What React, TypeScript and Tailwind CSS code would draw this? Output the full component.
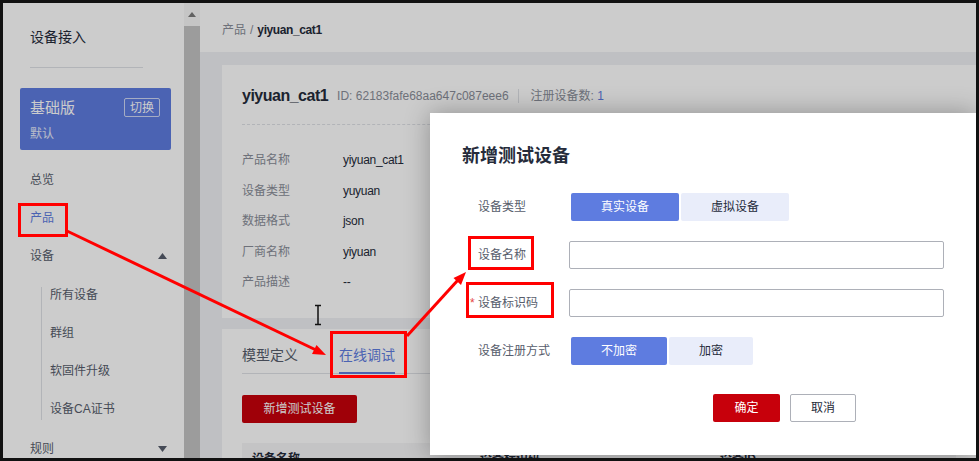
import { ReactNode } from 'react'

const font = 'font-["Liberation_Sans","Noto_Sans_CJK_SC",sans-serif]'

function Caret({ up }: { up?: boolean }) {
  return (
    <svg width="9" height="6" viewBox="0 0 9 6" className="fill-[#575d6c]">
      {up ? <path d="M0 6 L4.5 0 L9 6 Z" /> : <path d="M0 0 L4.5 6 L9 0 Z" />}
    </svg>
  )
}

function NavItem({ children, active, caret }: { children: ReactNode; active?: boolean; caret?: 'up' | 'down' }) {
  return (
    <div className="h-[38px] pl-[10px] flex items-center justify-between">
      <span className={`text-[12px] ${active ? 'text-[#5e7ce0]' : 'text-[#575d6c]'}`}>{children}</span>
      {caret && <Caret up={caret === 'up'} />}
    </div>
  )
}

function Sidebar() {
  return (
    <aside className="w-[181px] shrink-0 bg-white px-[17px] pt-[24px]">
      <div className="pl-[10px] text-[14px] leading-[20px] text-[#252b3a]">设备接入</div>
      <div className="ml-[10px] mt-[20px] h-px w-[113px] bg-[#dfe1e6]" />

      {/* edition card */}
      <div className="mt-[20px] h-[62px] w-[151px] rounded-[2px] bg-[#5e7ce0] px-[10px] pt-[10px] text-white">
        <div className="flex items-start justify-between">
          <span className="text-[15px] leading-[20px]">基础版</span>
          <span className="mr-[1px] flex h-[19px] w-[36px] items-center justify-center rounded-[2px] border border-white/70 text-[12px] leading-none">
            切换
          </span>
        </div>
        <div className="mt-[8px] text-[12px] leading-[16px] text-white/85">默认</div>
      </div>

      <div className="mt-[11px]">
        <NavItem>总览</NavItem>
        <NavItem active>产品</NavItem>
        <NavItem caret="up">设备</NavItem>
        <div className="relative mt-px">
          <span className="absolute left-[21px] top-[11px] bottom-[8px] w-px bg-[#dfe1e6]" />
          {['所有设备', '群组', '软固件升级', '设备CA证书'].map((s) => (
            <div key={s} className="flex h-[38px] items-center pl-[30px] text-[12px] text-[#575d6c]">
              {s}
            </div>
          ))}
        </div>
        <div className="mt-[2px]">
          <NavItem caret="down">规则</NavItem>
        </div>
      </div>
    </aside>
  )
}

function Scrollbar() {
  return (
    <div className="flex w-[16px] shrink-0 flex-col bg-[#f7f7f7]">
      <div className="flex h-[23px] items-center justify-center">
        <svg width="8" height="5" viewBox="0 0 8 5" className="fill-[#7a7a7a]">
          <path d="M0 5 L4 0 L8 5 Z" />
        </svg>
      </div>
      <div className="flex-1 bg-[#c4c4c4]" />
    </div>
  )
}

const info = [
  ['产品名称', 'yiyuan_cat1'],
  ['设备类型', 'yuyuan'],
  ['数据格式', 'json'],
  ['厂商名称', 'yiyuan'],
  ['产品描述', '--'],
]

function Main() {
  return (
    <main className="flex-1 bg-[#eff0f4]">
      <div className="flex h-[49px] items-center bg-white pl-[22px] pt-[5px] text-[12px]">
        <span className="text-[#8a8e99]">产品</span>
        <span className="mx-[4px] text-[#8a8e99]">/</span>
        <span className="font-bold tracking-[-0.4px] text-[#252b3a]">yiyuan_cat1</span>
      </div>

      <div className="pl-[22px] pt-[13px]">
        {/* product summary */}
        <div className="h-[253px] bg-white px-[20px] pt-[20px]">
          <div className="flex h-[22px] items-center">
            <span className="text-[16px] font-bold tracking-[-0.5px] text-[#252b3a]">yiyuan_cat1</span>
            <span className="ml-[9px] text-[12px] text-[#8a8e99]">ID: 62183fafe68aa647c087eee6</span>
            <span className="ml-[9px] h-[14px] w-px bg-[#dfe1e6]" />
            <span className="ml-[12px] text-[12px] text-[#8a8e99]">
              注册设备数: <span className="text-[#5e7ce0]">1</span>
            </span>
          </div>
          <div className="mt-[17px] border-t border-dashed border-[#dfe1e6]" />
          <div className="mt-[20px]">
            {info.map(([k, v]) => (
              <div key={k} className="flex h-[30.5px] items-center text-[12px]">
                <span className="w-[101px] text-[#8a8e99]">{k}</span>
                <span className="tracking-[-0.3px] text-[#252b3a]">{v}</span>
              </div>
            ))}
          </div>
        </div>

        {/* tabs + device list */}
        <div className="mt-[11px] h-[140px] bg-white px-[20px] pt-[7px]">
          <div className="flex h-[38px] gap-[41px] border-b border-[#dfe1e6] text-[14px]">
            <div className="flex items-center pt-[2px] text-[#575d6c]">模型定义</div>
            <div className="-mb-px flex items-center border-b-2 border-[#5e7ce0] pt-[2px] text-[#5e7ce0]">在线调试</div>
          </div>
          <button className="mt-[21px] h-[28px] w-[115px] rounded-[2px] bg-[#c7000b] text-[12px] text-white">
            新增测试设备
          </button>
          <div className="mt-[20px] flex h-[32px] items-center bg-[#f6f6f7] text-[12px] font-bold text-[#252b3a]">
            <span className="w-[238px] pl-[10px]">设备名称</span>
            <span className="w-[240px]">设备标识码</span>
            <span>设备ID</span>
          </div>
        </div>
      </div>
    </main>
  )
}

function Segmented({ items, active }: { items: string[]; active: number }) {
  return (
    <div className="flex h-[28px] gap-[2px]">
      {items.map((s, i) => (
        <div
          key={s}
          className={`flex items-center rounded-[2px] px-[30px] text-[12px] ${
            i === active ? 'bg-[#5e7ce0] text-white' : 'bg-[#e9edfa] text-[#252b3a]'
          }`}
        >
          {s}
        </div>
      ))}
    </div>
  )
}

function Field({ label, required, children }: { label: string; required?: boolean; children: ReactNode }) {
  return (
    <div className="flex h-[28px] items-center">
      <div className="flex w-[109px] items-center text-[12px] text-[#575d6c]">
        <span className="w-[16px] pl-[8px] text-[#e54545]">{required ? '*' : ''}</span>
        {label}
      </div>
      {children}
    </div>
  )
}

function AddDeviceDialog() {
  return (
    <div className="absolute left-[427px] right-0 top-[110px] h-[342px] bg-white px-[32px] pt-[31px] shadow-[0_0_24px_rgba(0,0,0,0.3)]">
      <h2 className="text-[18px] font-bold leading-[24px] text-[#252b3a]">新增测试设备</h2>
      <div className="mt-[25px] flex flex-col gap-[20px]">
        <Field label="设备类型">
          <Segmented items={['真实设备', '虚拟设备']} active={0} />
        </Field>
        <Field label="设备名称">
          <input className="h-[28px] w-[380px] rounded-[2px] border border-[#adb0b8] outline-none" />
        </Field>
        <Field label="设备标识码" required>
          <input className="h-[28px] w-[380px] rounded-[2px] border border-[#adb0b8] outline-none" />
        </Field>
        <Field label="设备注册方式">
          <Segmented items={['不加密', '加密']} active={0} />
        </Field>
      </div>
      <div className="mt-[29px] flex gap-[10px] pl-[251px] text-[12px]">
        <button className="h-[28px] w-[67px] rounded-[2px] bg-[#c7000b] text-white">确定</button>
        <button className="h-[28px] w-[66px] rounded-[2px] border border-[#adb0b8] text-[#252b3a]">取消</button>
      </div>
    </div>
  )
}

// red call-outs and the text cursor drawn on top of everything
function Callouts() {
  return (
    <svg className="pointer-events-none absolute -left-[3px] -top-[3px]" width="979" height="461" viewBox="0 0 979 461">
      <g fill="none" stroke="#ff0000" strokeWidth="3">
        <rect x="19.5" y="204.5" width="47" height="31" />
        <rect x="469.5" y="237.5" width="63" height="31" />
        <rect x="467.5" y="283.5" width="85" height="33" />
        <rect x="331.5" y="332.5" width="74" height="44" />
        <line x1="67" y1="231" x2="316" y2="350" />
        <line x1="407" y1="336" x2="458" y2="280" />
      </g>
      <g fill="#ff0000">
        <polygon points="326,355 312,354 316.5,345" />
        <polygon points="466,272 461,285 453.5,278" />
      </g>
      <g stroke="#111" strokeWidth="1.5" fill="none">
        <line x1="318" y1="306" x2="318" y2="324" />
        <line x1="315" y1="305.5" x2="321" y2="305.5" />
        <line x1="315" y1="324.5" x2="321" y2="324.5" />
      </g>
    </svg>
  )
}

export default function App() {
  return (
    <div className={`relative h-[461px] w-[979px] overflow-hidden border-[3px] border-[#111] ${font}`}>
      <div className="flex h-full">
        <Sidebar />
        <Scrollbar />
        <Main />
      </div>
      {/* modal mask */}
      <div className="absolute inset-0 bg-black/20" />
      <AddDeviceDialog />
      <Callouts />
    </div>
  )
}
